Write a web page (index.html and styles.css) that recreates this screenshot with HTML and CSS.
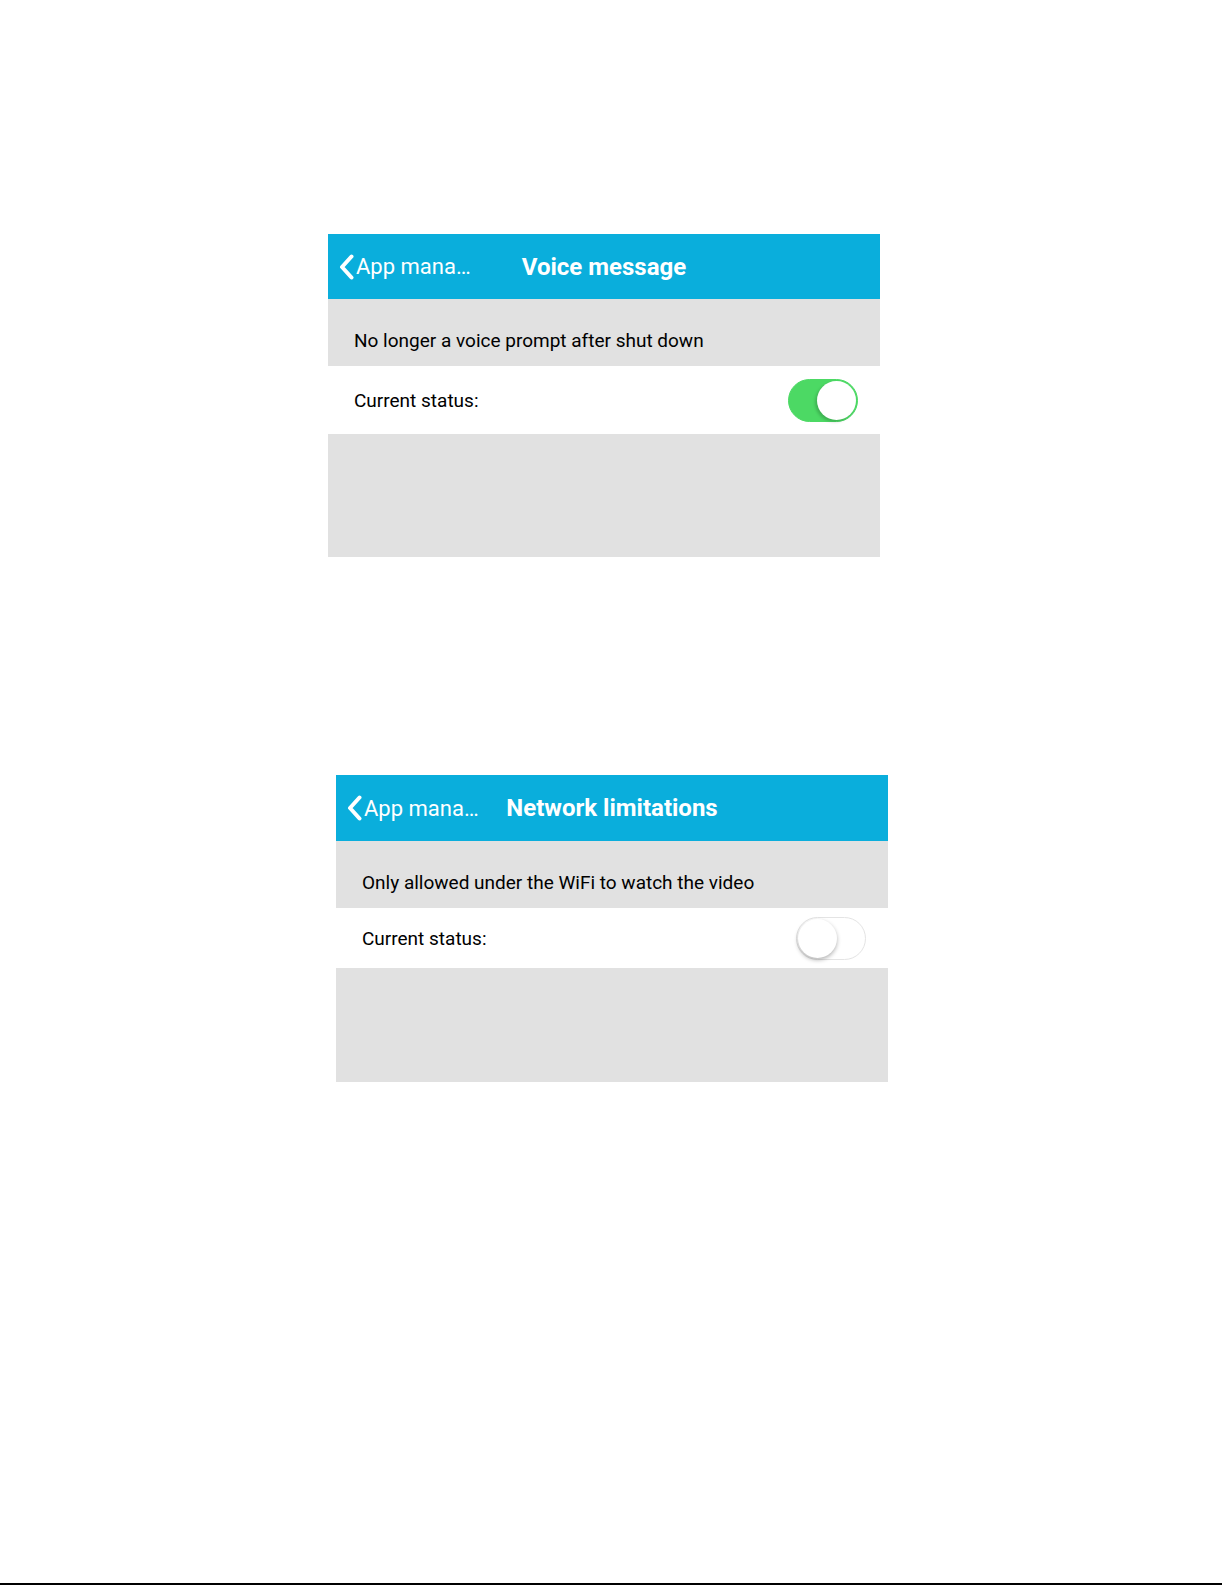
FILE: index.html
```html
<!doctype html>
<html>
<head>

  <title>App settings</title>

  <link rel="stylesheet" href="styles.css">

</head>
<body>

  <div class="page">

    <section class="panel panel-voice">
      <header class="bar">
        <a class="back" href="#">
          <svg class="chev" width="15" height="26" viewBox="0 0 15 26"><path d="M12.5 2.5 L3 13 L12.5 23.5" fill="none" stroke="#fff" stroke-width="4" stroke-linecap="round" stroke-linejoin="round"/></svg>
          <span>App mana…</span>
        </a>
        <h1 class="title">Voice message</h1>
        <span></span>
      </header>
      <div class="desc">No longer a voice prompt after shut down</div>
      <div class="status">
        <span>Current status:</span>
        <span class="switch on"><span class="knob"></span></span>
      </div>
      <div class="fill"></div>
    </section>

    <section class="panel panel-net">
      <header class="bar">
        <a class="back" href="#">
          <svg class="chev" width="15" height="26" viewBox="0 0 15 26"><path d="M12.5 2.5 L3 13 L12.5 23.5" fill="none" stroke="#fff" stroke-width="4" stroke-linecap="round" stroke-linejoin="round"/></svg>
          <span>App mana…</span>
        </a>
        <h1 class="title">Network limitations</h1>
        <span></span>
      </header>
      <div class="desc">Only allowed under the WiFi to watch the video</div>
      <div class="status">
        <span>Current status:</span>
        <span class="switch"><span class="knob"></span></span>
      </div>
      <div class="fill"></div>
    </section>

    <div class="rule"></div>

  </div>

</body>
</html>
```

FILE: styles.css
```css
body {
  margin: 0;
  background: #fff;
  font-family: Roboto, "Liberation Sans", sans-serif;
  color: #000;
}

.page {
  display: flex;
  flex-direction: column;
  height: 1585px;
  padding-top: 234px;
  box-sizing: border-box;
}

.panel {
  display: flex;
  flex-direction: column;
  width: 552px;
}

.panel-voice {
  margin-left: 328px;
}

.panel-net {
  margin-left: 336px;
  margin-top: 218px;
}

/* top bar */
.bar {
  display: grid;
  grid-template-columns: 1fr auto 1fr;
  align-items: center;
  height: 65px;
  background: #0aaedc;
  color: #fff;
}

.panel-net .bar {
  height: 66px;
}

.back {
  display: flex;
  align-items: center;
  gap: 2px;
  padding-left: 11px;
  color: #fff;
  text-decoration: none;
  font-size: 22px;
  white-space: nowrap;
}

.chev {
  display: block;
}

.title {
  margin: 0;
  font-size: 24px;
  font-weight: 700;
  white-space: nowrap;
}

/* rows */
.desc {
  display: flex;
  align-items: center;
  height: 67px;
  box-sizing: border-box;
  padding: 16px 0 0 26px;
  background: #e1e1e1;
  font-size: 19px;
}

.status {
  display: flex;
  align-items: center;
  justify-content: space-between;
  height: 68px;
  padding: 0 22px 0 26px;
  background: #fff;
  font-size: 19px;
}

.panel-net .status {
  height: 60px;
}

.fill {
  height: 123px;
  background: #e1e1e1;
}

.panel-net .fill {
  height: 114px;
}

/* switch */
.switch {
  display: flex;
  align-items: center;
  width: 70px;
  height: 43px;
  box-sizing: border-box;
  padding: 0 1px;
  border: 1.5px solid #e4e4e4;
  border-radius: 22px;
  background: #fff;
}

.switch.on {
  justify-content: flex-end;
  border-color: #4cd964;
  background: #4cd964;
}

.knob {
  width: 39px;
  height: 39px;
  border-radius: 50%;
  background: #fff;
  box-shadow: 0 2px 4px rgba(0, 0, 0, 0.3);
}

.switch.on .knob {
  box-shadow: -2px 2px 3px rgba(0, 0, 0, 0.18);
}

.rule {
  width: 1222px;
  height: 2px;
  margin-top: auto;
  background: #000;
}
```
